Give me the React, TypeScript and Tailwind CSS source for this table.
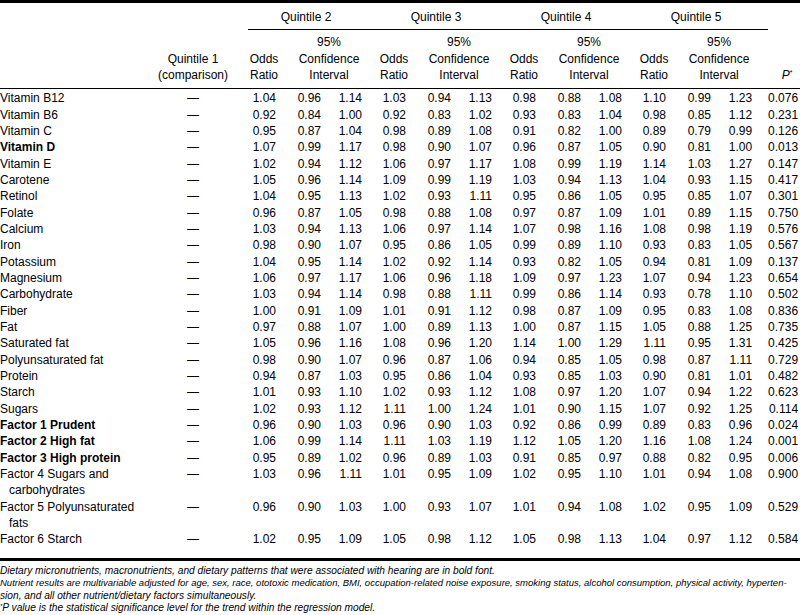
const rows: { name: string; wrap?: string; bold?: boolean; v: string[] }[] = [
  { name: "Vitamin B12", v: ["1.04", "0.96", "1.14", "1.03", "0.94", "1.13", "0.98", "0.88", "1.08", "1.10", "0.99", "1.23", "0.076"] },
  { name: "Vitamin B6", v: ["0.92", "0.84", "1.00", "0.92", "0.83", "1.02", "0.93", "0.83", "1.04", "0.98", "0.85", "1.12", "0.231"] },
  { name: "Vitamin C", v: ["0.95", "0.87", "1.04", "0.98", "0.89", "1.08", "0.91", "0.82", "1.00", "0.89", "0.79", "0.99", "0.126"] },
  { name: "Vitamin D", bold: true, v: ["1.07", "0.99", "1.17", "0.98", "0.90", "1.07", "0.96", "0.87", "1.05", "0.90", "0.81", "1.00", "0.013"] },
  { name: "Vitamin E", v: ["1.02", "0.94", "1.12", "1.06", "0.97", "1.17", "1.08", "0.99", "1.19", "1.14", "1.03", "1.27", "0.147"] },
  { name: "Carotene", v: ["1.05", "0.96", "1.14", "1.09", "0.99", "1.19", "1.03", "0.94", "1.13", "1.04", "0.93", "1.15", "0.417"] },
  { name: "Retinol", v: ["1.04", "0.95", "1.13", "1.02", "0.93", "1.11", "0.95", "0.86", "1.05", "0.95", "0.85", "1.07", "0.301"] },
  { name: "Folate", v: ["0.96", "0.87", "1.05", "0.98", "0.88", "1.08", "0.97", "0.87", "1.09", "1.01", "0.89", "1.15", "0.750"] },
  { name: "Calcium", v: ["1.03", "0.94", "1.13", "1.06", "0.97", "1.14", "1.07", "0.98", "1.16", "1.08", "0.98", "1.19", "0.576"] },
  { name: "Iron", v: ["0.98", "0.90", "1.07", "0.95", "0.86", "1.05", "0.99", "0.89", "1.10", "0.93", "0.83", "1.05", "0.567"] },
  { name: "Potassium", v: ["1.04", "0.95", "1.14", "1.02", "0.92", "1.14", "0.93", "0.82", "1.05", "0.94", "0.81", "1.09", "0.137"] },
  { name: "Magnesium", v: ["1.06", "0.97", "1.17", "1.06", "0.96", "1.18", "1.09", "0.97", "1.23", "1.07", "0.94", "1.23", "0.654"] },
  { name: "Carbohydrate", v: ["1.03", "0.94", "1.14", "0.98", "0.88", "1.11", "0.99", "0.86", "1.14", "0.93", "0.78", "1.10", "0.502"] },
  { name: "Fiber", v: ["1.00", "0.91", "1.09", "1.01", "0.91", "1.12", "0.98", "0.87", "1.09", "0.95", "0.83", "1.08", "0.836"] },
  { name: "Fat", v: ["0.97", "0.88", "1.07", "1.00", "0.89", "1.13", "1.00", "0.87", "1.15", "1.05", "0.88", "1.25", "0.735"] },
  { name: "Saturated fat", v: ["1.05", "0.96", "1.16", "1.08", "0.96", "1.20", "1.14", "1.00", "1.29", "1.11", "0.95", "1.31", "0.425"] },
  { name: "Polyunsaturated fat", v: ["0.98", "0.90", "1.07", "0.96", "0.87", "1.06", "0.94", "0.85", "1.05", "0.98", "0.87", "1.11", "0.729"] },
  { name: "Protein", v: ["0.94", "0.87", "1.03", "0.95", "0.86", "1.04", "0.93", "0.85", "1.03", "0.90", "0.81", "1.01", "0.482"] },
  { name: "Starch", v: ["1.01", "0.93", "1.10", "1.02", "0.93", "1.12", "1.08", "0.97", "1.20", "1.07", "0.94", "1.22", "0.623"] },
  { name: "Sugars", v: ["1.02", "0.93", "1.12", "1.11", "1.00", "1.24", "1.01", "0.90", "1.15", "1.07", "0.92", "1.25", "0.114"] },
  { name: "Factor 1 Prudent", bold: true, v: ["0.96", "0.90", "1.03", "0.96", "0.90", "1.03", "0.92", "0.86", "0.99", "0.89", "0.83", "0.96", "0.024"] },
  { name: "Factor 2 High fat", bold: true, v: ["1.06", "0.99", "1.14", "1.11", "1.03", "1.19", "1.12", "1.05", "1.20", "1.16", "1.08", "1.24", "0.001"] },
  { name: "Factor 3 High protein", bold: true, v: ["0.95", "0.89", "1.02", "0.96", "0.89", "1.03", "0.91", "0.85", "0.97", "0.88", "0.82", "0.95", "0.006"] },
  { name: "Factor 4 Sugars and", wrap: "carbohydrates", v: ["1.03", "0.96", "1.11", "1.01", "0.95", "1.09", "1.02", "0.95", "1.10", "1.01", "0.94", "1.08", "0.900"] },
  { name: "Factor 5 Polyunsaturated", wrap: "fats", v: ["0.96", "0.90", "1.03", "1.00", "0.93", "1.07", "1.01", "0.94", "1.08", "1.02", "0.95", "1.09", "0.529"] },
  { name: "Factor 6 Starch", v: ["1.02", "0.95", "1.09", "1.05", "0.98", "1.12", "1.05", "0.98", "1.13", "1.04", "0.97", "1.12", "0.584"] },
];

const quintiles = ["Quintile 2", "Quintile 3", "Quintile 4", "Quintile 5"];

// per-column cell classes inside one quintile group (odds / lower / upper)
const numCls = ["text-right pr-[4px]", "text-right pr-[1px]", "text-right pr-[16px]"];

export default function App() {
  return (
    <div className="w-[800px] bg-white text-black font-['Liberation_Sans',Arial,sans-serif]">
      <table className="w-[800px] table-fixed border-collapse text-[12px] leading-[16.33px]">
        <colgroup>
          <col className="w-[144px]" />
          <col className="w-[104px]" />
          {quintiles.map((q) => [
            <col key={q + "a"} className="w-[32px]" />,
            <col key={q + "b"} className="w-[42px]" />,
            <col key={q + "c"} className="w-[56px]" />,
          ])}
          <col className="w-[32px]" />
        </colgroup>
        <thead>
          <tr className="border-t-[3px] border-black">
            <th />
            <th />
            {quintiles.map((q) => (
              <th
                key={q}
                colSpan={3}
                className="border-b border-black pt-[6px] pb-[4px] pr-[14px] text-center font-normal"
              >
                {q}
              </th>
            ))}
            <th />
          </tr>
          <tr className="border-b border-black">
            <th />
            <th className="pt-[4px] pb-[5px] pr-[6px] align-bottom text-center font-normal">
              Quintile 1
              <br />
              (comparison)
            </th>
            {quintiles.map((q) => [
              <th key={q + "o"} className="pt-[4px] pb-[5px] align-bottom text-center font-normal whitespace-nowrap">
                Odds
                <br />
                Ratio
              </th>,
              <th key={q + "c"} colSpan={2} className="pt-[4px] pb-[5px] align-bottom text-center font-normal">
                95%
                <br />
                Confidence
                <br />
                Interval
              </th>,
            ])}
            <th className="pt-[4px] pb-[5px] pl-[6px] align-bottom text-center font-normal italic">
              P<sup className="text-[7px] not-italic">*</sup>
            </th>
          </tr>
        </thead>
        <tbody className="border-b-[3px] border-black">
          {rows.map((r, i) => {
            const pad = i === 0 ? "pt-[1px]" : i === rows.length - 1 ? "pb-[10px]" : "";
            return (
              <tr key={r.name} className="align-top">
                <td className={`whitespace-nowrap ${pad} ${r.bold ? "font-bold" : ""}`}>
                  {r.name}
                  {r.wrap && <div className="pl-[9px]">{r.wrap}</div>}
                </td>
                <td className={`text-center pr-[6px] ${pad}`}>—</td>
                {r.v.slice(0, 12).map((n, j) => (
                  <td key={j} className={`${numCls[j % 3]} ${pad}`}>
                    {n}
                  </td>
                ))}
                <td className={`text-right pr-[2px] ${pad}`}>{r.v[12]}</td>
              </tr>
            );
          })}
        </tbody>
      </table>

      {/* Footnotes */}
      <div className="pt-[4px] text-[10.2px] leading-[12.6px] italic">
        <p className="whitespace-nowrap">
          Dietary micronutrients, macronutrients, and dietary patterns that were associated with hearing are in bold font.
        </p>
        <p className="whitespace-nowrap text-[9.5px]">
          Nutrient results are multivariable adjusted for age, sex, race, ototoxic medication, BMI, occupation-related noise
          exposure, smoking status, alcohol consumption, physical activity, hyperten-
        </p>
        <p className="whitespace-nowrap">sion, and all other nutrient/dietary factors simultaneously.</p>
        <p className="whitespace-nowrap">
          <sup className="text-[6px]">*</sup>P value is the statistical significance level for the trend within the regression model.
        </p>
      </div>
    </div>
  );
}
